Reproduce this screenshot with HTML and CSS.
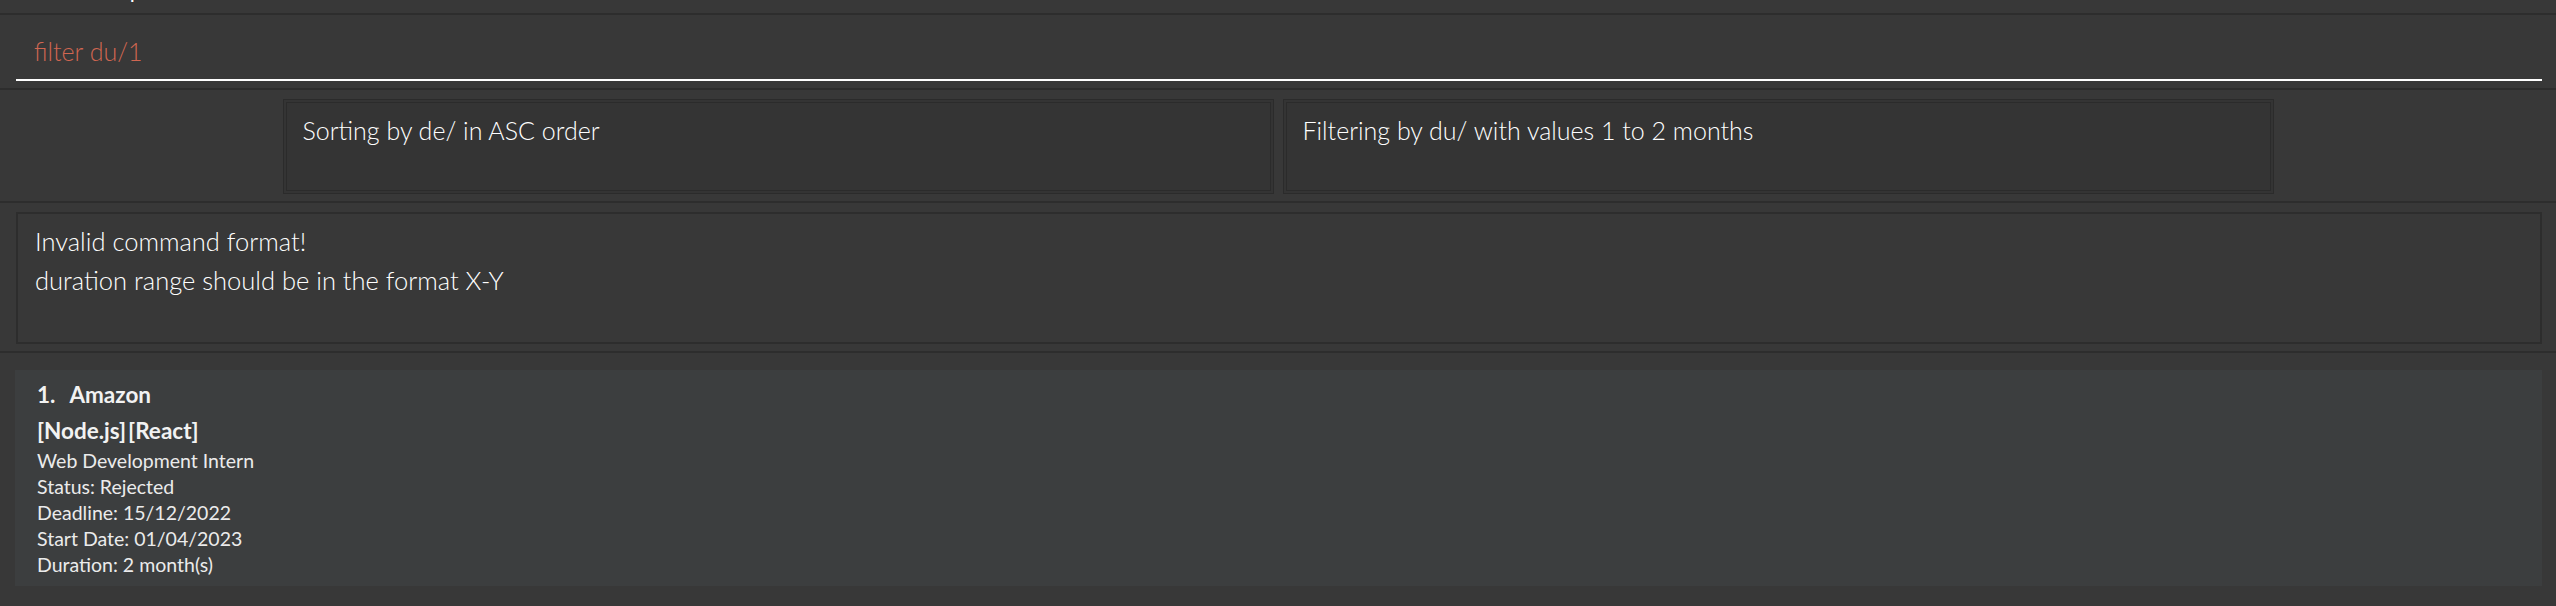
FILE: index.html
```html
<!DOCTYPE html>
<html lang="en">
<head>
<meta charset="utf-8">
<title>Internship Tracker</title>
<link rel="stylesheet" href="styles.css">
</head>
<body>
<div class="app">
  <div class="menubar">
    <div class="menu-items">
      <span class="menu-item">File</span>
      <span class="menu-item">Help</span>
    </div>
  </div>
  <div class="command-pane">
    <div class="command-field"><span class="command-text error">filter du/1</span></div>
  </div>
  <div class="status-pane">
    <div class="status-box"><div class="status-inner">Sorting by de/ in ASC order</div></div>
    <div class="status-box"><div class="status-inner">Filtering by du/ with values 1 to 2 months</div></div>
  </div>
  <div class="result-pane">
    <div class="result-box">
      <div class="result-line">Invalid command format!</div>
      <div class="result-line">duration range should be in the format X-Y</div>
    </div>
  </div>
  <div class="list-pane">
    <div class="card">
      <div class="card-title"><span class="card-id">1.</span><span class="card-name">Amazon</span></div>
      <div class="card-tags"><span>[Node.js]</span><span>[React]</span></div>
      <div class="card-lines">
        <div class="card-line">Web Development Intern</div>
        <div class="card-line">Status: Rejected</div>
        <div class="card-line">Deadline: 15/12/2022</div>
        <div class="card-line">Start Date: 01/04/2023</div>
        <div class="card-line">Duration: 2 month(s)</div>
      </div>
    </div>
  </div>
</div>
</body>
</html>
```
FILE: styles.css
```css
html, body {
  margin: 0;
  padding: 0;
  background: #383838;
}

body {
  width: 2556px;
  height: 606px;
  overflow: hidden;
  font-family: "Lato", "Open Sans", "Liberation Sans", sans-serif;
  color: #ffffff;
}

.app {
  display: flex;
  flex-direction: column;
  height: 606px;
}

.menubar {
  height: 13px;
  overflow: hidden;
  border-bottom: 2px solid #2d2d2d;
  background: #383838;
}

.menu-items {
  display: flex;
  gap: 48px;
  padding-left: 14px;
  margin-top: -25px;
  font-size: 22px;
  line-height: 30px;
  color: #ffffff;
}

.command-pane {
  height: 75px;
  box-sizing: border-box;
  padding: 0 14px 0 16px;
  border-bottom: 2px solid #2d2d2d;
}

.command-field {
  height: 66px;
  box-sizing: border-box;
  padding: 21px 0 0 18px;
  border-bottom: 2px solid #ffffff;
  font-size: 25px;
  line-height: 30px;
  font-weight: 300;
}

.error {
  color: #d06651;
}

.status-pane {
  height: 113px;
  box-sizing: border-box;
  padding-top: 9px;
  display: flex;
  justify-content: center;
  gap: 9px;
  border-bottom: 2px solid #2d2d2d;
}

.status-box {
  width: 991px;
  height: 95px;
  box-sizing: border-box;
  border: 1px solid #2b2b2b;
  padding: 2px;
  background: #343434;
}

.status-inner {
  height: 100%;
  box-sizing: border-box;
  border: 1px solid #2b2b2b;
  padding: 12px 0 0 16px;
  font-size: 25px;
  line-height: 30px;
  font-weight: 300;
  background:
    linear-gradient(#c8c8c8, #c8c8c8) 3px 1px / 2px 2px no-repeat,
    linear-gradient(#c8c8c8, #c8c8c8) right 3px top 1px / 2px 2px no-repeat,
    linear-gradient(#c8c8c8, #c8c8c8) 3px bottom 1px / 2px 2px no-repeat,
    linear-gradient(#c8c8c8, #c8c8c8) right 3px bottom 1px / 2px 2px no-repeat,
    #383838;
}

.result-pane {
  height: 150px;
  box-sizing: border-box;
  padding: 9px 14px 0 16px;
  border-bottom: 2px solid #2d2d2d;
}

.result-box {
  height: 132px;
  box-sizing: border-box;
  border: 2px solid #2d2d2d;
  padding: 8px 0 0 17px;
  font-size: 25.5px;
  line-height: 39px;
  font-weight: 300;
}

.list-pane {
  flex: 1;
  padding: 17px 14px 0 15px;
}

.card {
  background: #3c3e3f;
  height: 216px;
  box-sizing: border-box;
  padding: 10px 0 0 22px;
  color: #ebebeb;
}

.card-title {
  display: flex;
  gap: 14px;
  font-size: 22.5px;
  line-height: 30px;
  font-weight: 700;
  color: #f2f2f2;
}

.card-tags {
  display: flex;
  gap: 2px;
  margin-top: 6px;
  font-size: 22.5px;
  line-height: 30px;
  font-weight: 700;
  color: #f2f2f2;
}

.card-lines {
  margin-top: 2px;
}

.card-line {
  font-size: 19.5px;
  line-height: 26px;
}
```
